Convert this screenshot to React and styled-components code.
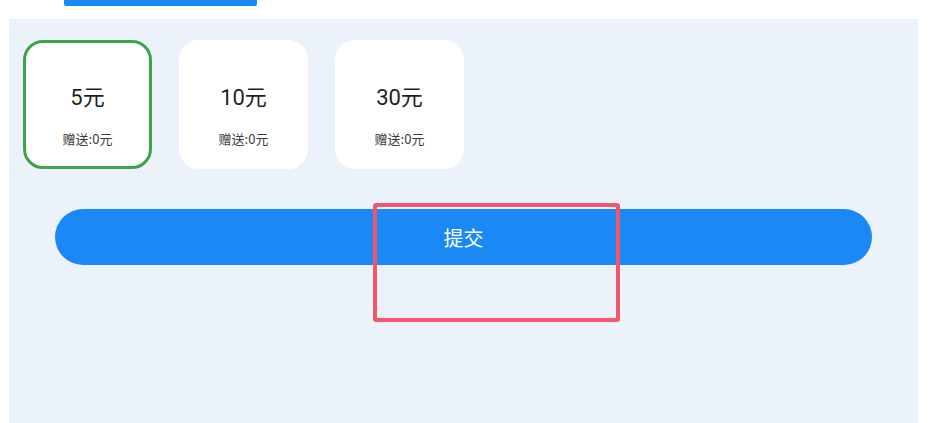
import styled, { createGlobalStyle } from "styled-components";

const GlobalStyle = createGlobalStyle`
  html, body {
    margin: 0;
    padding: 0;
    background: #ffffff;
    font-family: Roboto, "Noto Sans CJK SC", sans-serif;
  }
`;

const Page = styled.div`
  width: 943px;
  height: 423px;
  overflow: hidden;
  position: relative;
`;

const TopStrip = styled.div`
  height: 19px;
  padding-left: 64px;
`;

const TabBar = styled.div`
  width: 193px;
  height: 6px;
  background: #1a88f5;
  border-radius: 0 0 2px 2px;
`;

const Panel = styled.div`
  margin-left: 9px;
  width: 909px;
  height: 404px;
  background: #ecf2f9;
  padding: 21px 0 0 14px;
  box-sizing: border-box;
`;

const CardRow = styled.div`
  display: flex;
  gap: 27px;
`;

const Card = styled.div`
  width: 129px;
  height: 129px;
  box-sizing: border-box;
  background: #ffffff;
  border-radius: 20px;
  border: 3px solid ${(p) => (p.$active ? "#3fa34d" : "#ffffff")};
  display: flex;
  flex-direction: column;
  align-items: center;
  padding-top: 42px;
`;

const Amount = styled.div`
  font-family: Roboto, "Noto Sans CJK SC", sans-serif;
  font-size: 22px;
  line-height: 26px;
  color: #1f1f1f;
`;

const Bonus = styled.div`
  margin-top: 20px;
  font-family: "Noto Sans CJK SC", sans-serif;
  font-size: 13px;
  line-height: 16px;
  color: #3a3a3a;
`;

const SubmitButton = styled.button`
  display: block;
  margin: 40px 0 0 32px;
  width: 817px;
  height: 56px;
  border: none;
  border-radius: 28px;
  background: #1a88f5;
  color: #ffffff;
  font-family: "Noto Sans CJK SC", sans-serif;
  font-size: 20px;
`;

const Highlight = styled.div`
  position: absolute;
  left: 373px;
  top: 203px;
  width: 247px;
  height: 119px;
  box-sizing: border-box;
  border: 4px solid #f2566a;
  border-radius: 3px;
  pointer-events: none;
`;

const options = [
  { amount: "5元", bonus: "赠送:0元", active: true },
  { amount: "10元", bonus: "赠送:0元" },
  { amount: "30元", bonus: "赠送:0元" },
];

export default function App() {
  return (
    <>
      <GlobalStyle />
      <Page>
        <TopStrip>
          <TabBar />
        </TopStrip>
        <Panel>
          <CardRow>
            {options.map((o) => (
              <Card key={o.amount} $active={o.active}>
                <Amount>{o.amount}</Amount>
                <Bonus>{o.bonus}</Bonus>
              </Card>
            ))}
          </CardRow>
          <SubmitButton>提交</SubmitButton>
        </Panel>
        <Highlight />
      </Page>
    </>
  );
}
